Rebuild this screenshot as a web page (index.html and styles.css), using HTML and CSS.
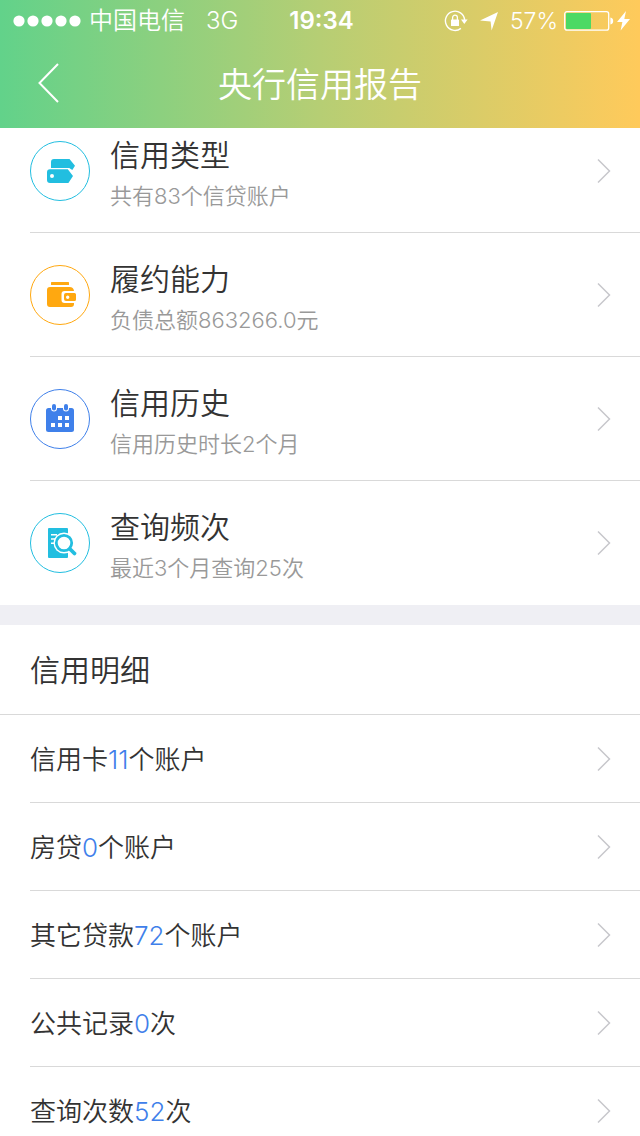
FILE: index.html
```
<!DOCTYPE html>
<html lang="zh-CN">

<head>
    <meta charset="UTF-8">
    <meta name="viewport" content="width=device-width, initial-scale=1.0">
    <title>央行信用报告</title>
    <link rel="stylesheet" href="styles.css">
</head>

<body>
    <header class="header">
        <div class="status-bar">
            <div class="status-left">
                <svg class="signal" width="68" height="12" viewBox="0 0 68 12" fill="#fff">
                    <circle cx="6" cy="6" r="5.6" />
                    <circle cx="20" cy="6" r="5.6" />
                    <circle cx="34" cy="6" r="5.6" />
                    <circle cx="48" cy="6" r="5.6" />
                    <circle cx="62" cy="6" r="5.6" />
                </svg>
                <span class="carrier">中国电信</span>
                <span class="network">3G</span>
            </div>
            <span class="time">19:34</span>
            <div class="status-right">
                <svg width="24" height="22" viewBox="0 0 24 22">
                    <path d="M16.9 18.4A9.6 9.6 0 1 1 20.6 10" fill="none" stroke="#fff" stroke-width="1.4" />
                    <path d="M17 9.5h6.6L20.3 14z" fill="#fff" />
                    <rect x="7" y="9.5" width="8" height="6.5" rx="0.6" fill="#fff" />
                    <path d="M8.6 10V7.6a2.4 2.4 0 0 1 4.8 0V10" fill="none" stroke="#fff" stroke-width="1.3" />
                </svg>
                <svg class="location" width="18" height="19" viewBox="0 0 18 19" fill="#fff">
                    <path d="M18 0L11.6 18.6L10.6 9.6L0 8.6z" />
                </svg>
                <span class="percent">57%</span>
                <svg width="50" height="20" viewBox="0 0 50 20">
                    <rect x="0.7" y="0.7" width="44" height="18.4" rx="2.2" fill="none" stroke="#fff" stroke-width="1.3" />
                    <rect x="2" y="2" width="25" height="16" rx="1" fill="#4cd964" />
                    <path d="M46.4 6.5c2 .4 2.8 1.6 2.8 3.5s-.8 3.1-2.8 3.5z" fill="#fff" />
                </svg>
                <svg class="bolt" width="13" height="20" viewBox="0 0 13 20" fill="#fff">
                    <path d="M9 0L0 11h5.4L3.6 19.5L13 8H7.3z" />
                </svg>
            </div>
        </div>
        <div class="nav-bar">
            <button class="back" type="button" aria-label="返回">
                <svg width="22" height="40" viewBox="0 0 22 40">
                    <path d="M20 1L1.5 20L20 39" fill="none" stroke="#fff" stroke-width="2" />
                </svg>
            </button>
            <h1 class="page-title">央行信用报告</h1>
        </div>
    </header>

    <main class="content">
        <nav class="summary">
            <a class="summary-row" href="#type">
                <svg class="icon cyan" width="60" height="60" viewBox="0 0 60 60">
                    <circle class="ring" cx="30" cy="30" r="29.5" />
                    <path d="M21 27V21a3 3 0 0 1 3-3h15.5L45 24.8L42.3 29L39.2 27z" />
                    <path fill-rule="evenodd" d="M20 28.300h17.800L43 35l-4.600 7H20a3 3 0 0 1-3-3v-7.700a3 3 0 0 1 3-3zM22 33a2 2 0 1 0 0 4a2 2 0 0 0 0-4z" />
                </svg>
                <div class="summary-text">
                    <h2>信用类型</h2>
                    <p>共有83个信贷账户</p>
                </div>
                <svg class="arrow" width="14" height="26" viewBox="0 0 14 26"><path d="M1 1.5L12.5 13L1 24.5" /></svg>
            </a>
            <a class="summary-row" href="#ability">
                <svg class="icon orange" width="60" height="60" viewBox="0 0 60 60">
                    <circle class="ring" cx="30" cy="30" r="29.5" />
                    <rect x="21" y="17" width="18" height="3" rx="0.5" />
                    <path d="M20 22h19.5a4.5 4.5 0 0 1 4.5 4H34.500a3 3 0 0 0-3 3v6a3 3 0 0 0 3 3H44v1a3 3 0 0 1-3 3H20a3 3 0 0 1-3-3V25a3 3 0 0 1 3-3z" />
                    <path fill-rule="evenodd" d="M36 28h8.500a1.500 1.500 0 0 1 1.500 1.500v5a1.500 1.500 0 0 1-1.500 1.500H36a2 2 0 0 1-2-2v-4a2 2 0 0 1 2-2zM37.700 30.500a1.700 1.700 0 1 0 0 3.400a1.700 1.700 0 0 0 0-3.400z" />
                </svg>
                <div class="summary-text">
                    <h2>履约能力</h2>
                    <p>负债总额863266.0元</p>
                </div>
                <svg class="arrow" width="14" height="26" viewBox="0 0 14 26"><path d="M1 1.5L12.5 13L1 24.5" /></svg>
            </a>
            <a class="summary-row" href="#history">
                <svg class="icon blue" width="60" height="60" viewBox="0 0 60 60">
                    <circle class="ring" cx="30" cy="30" r="29.5" />
                    <rect x="16" y="19" width="28" height="24" rx="2.5" />
                    <rect class="hole" x="21" y="14" width="6" height="8.5" rx="3" />
                    <rect class="hole" x="33" y="14" width="6" height="8.5" rx="3" />
                    <rect x="22" y="15" width="4" height="6.5" rx="2" />
                    <rect x="34" y="15" width="4" height="6.5" rx="2" />
                    <path class="hole" d="M28 27h4v4h-4zM35 27h4v4h-4zM21 34h4v4h-4zM28 34h4v4h-4zM35 34h4v4h-4z" />
                </svg>
                <div class="summary-text">
                    <h2>信用历史</h2>
                    <p>信用历史时长2个月</p>
                </div>
                <svg class="arrow" width="14" height="26" viewBox="0 0 14 26"><path d="M1 1.5L12.5 13L1 24.5" /></svg>
            </a>
            <a class="summary-row" href="#query">
                <svg class="icon cyan" width="60" height="60" viewBox="0 0 60 60">
                    <circle class="ring" cx="30" cy="30" r="29.5" />
                    <rect x="18" y="15" width="20" height="30" rx="1" />
                    <path class="hole" d="M21 21h6v1.5h-6zM21 25.300h4v1.5h-4zM21 29.600h4v1.5h-4z" />
                    <circle class="hole" cx="34" cy="30" r="10.5" />
                    <path d="M39 35l5 5" stroke="#fff" stroke-width="6" />
                    <circle cx="34" cy="30" r="7.700" fill="#fff" stroke="#22bee0" stroke-width="2.800" />
                    <path d="M40 36l4.500 4.500" stroke="#22bee0" stroke-width="3.800" stroke-linecap="round" />
                </svg>
                <div class="summary-text">
                    <h2>查询频次</h2>
                    <p>最近3个月查询25次</p>
                </div>
                <svg class="arrow" width="14" height="26" viewBox="0 0 14 26"><path d="M1 1.5L12.5 13L1 24.5" /></svg>
            </a>
        </nav>

        <section class="detail">
            <h2 class="detail-title">信用明细</h2>
            <a class="detail-row" href="#card">
                <span>信用卡<em>11</em>个账户</span>
                <svg class="arrow" width="14" height="26" viewBox="0 0 14 26"><path d="M1 1.5L12.5 13L1 24.5" /></svg>
            </a>
            <a class="detail-row" href="#house">
                <span>房贷<em>0</em>个账户</span>
                <svg class="arrow" width="14" height="26" viewBox="0 0 14 26"><path d="M1 1.5L12.5 13L1 24.5" /></svg>
            </a>
            <a class="detail-row" href="#loan">
                <span>其它贷款<em>72</em>个账户</span>
                <svg class="arrow" width="14" height="26" viewBox="0 0 14 26"><path d="M1 1.5L12.5 13L1 24.5" /></svg>
            </a>
            <a class="detail-row" href="#public">
                <span>公共记录<em>0</em>次</span>
                <svg class="arrow" width="14" height="26" viewBox="0 0 14 26"><path d="M1 1.5L12.5 13L1 24.5" /></svg>
            </a>
            <a class="detail-row" href="#times">
                <span>查询次数<em>52</em>次</span>
                <svg class="arrow" width="14" height="26" viewBox="0 0 14 26"><path d="M1 1.5L12.5 13L1 24.5" /></svg>
            </a>
        </section>
    </main>
</body>

</html>
```

FILE: styles.css
```
* {
    box-sizing: border-box;
}

body {
    margin: 0;
    background-color: #fff;
    color: #333;
    font-family: Inter, "Noto Sans CJK SC", sans-serif;
    font-weight: 350;
}

h1,
h2,
p {
    margin: 0;
    font-weight: 350;
}

a {
    color: inherit;
    text-decoration: none;
}

svg {
    display: block;
    flex: none;
}

/* header stays on top, the list scrolls under it */
.header {
    position: sticky;
    top: 0;
    z-index: 1;
    background: linear-gradient(to right, #62d28a, #b6ce74 50%, #ffca5b);
    color: #fff;
}

.status-bar {
    display: grid;
    grid-template-columns: 1fr auto 1fr;
    align-items: center;
    height: 42px;
    padding: 0 10px 0 13px;
    font-size: 24px;
    line-height: 42px;
}

.status-left,
.status-right {
    display: flex;
    align-items: center;
}

.status-right {
    justify-content: flex-end;
}

.carrier {
    margin-left: 8px;
}

.network {
    margin-left: 21px;
}

.time {
    font-weight: 600;
}

.location {
    margin-left: 12px;
}

.percent {
    margin: 0 6px 0 12px;
    font-size: 23px;
}

.bolt {
    margin-left: 3px;
}

.nav-bar {
    display: grid;
    grid-template-columns: 100px 1fr 100px;
    align-items: center;
    height: 86px;
}

.back {
    width: 100px;
    height: 86px;
    padding: 0 0 4px 38px;
    border: none;
    background: none;
    cursor: pointer;
}

.page-title {
    font-size: 34px;
    line-height: 86px;
    text-align: center;
}

.content {
    margin-top: -19px;
}

.summary {
    border-bottom: 20px solid #efeff4;
}

.summary-row,
.detail-row {
    display: flex;
    align-items: center;
    justify-content: space-between;
    margin-left: 30px;
    padding-right: 29px;
    border-bottom: 1px solid #d9d9d9;
}

.summary-row {
    height: 124px;
}

.summary-row:last-child {
    border-bottom-color: transparent;
}

.summary-text {
    flex: 1;
    padding: 8px 0 0 20px;
}

.summary-text h2 {
    font-size: 30px;
    line-height: 42px;
}

.summary-text p {
    color: #999;
    font-size: 22px;
    line-height: 40px;
}

.icon .ring {
    fill: none;
    stroke: currentColor;
    stroke-width: 1;
}

.icon {
    fill: currentColor;
}

.icon .hole {
    fill: #fff;
}

.cyan {
    color: #22bee0;
}

.orange {
    color: #ffa810;
}

.blue {
    color: #3f80ea;
}

.arrow path {
    fill: none;
    stroke: #c7c7cc;
    stroke-width: 1.5;
}

.detail-title {
    height: 90px;
    padding-left: 30px;
    border-bottom: 1px solid #d9d9d9;
    font-size: 30px;
    line-height: 90px;
}

.detail-row {
    height: 88px;
    font-size: 26px;
}

.detail-row span {
    padding-bottom: 2px;
}

.detail-row em {
    color: #3f80ea;
    font-style: normal;
}
```
